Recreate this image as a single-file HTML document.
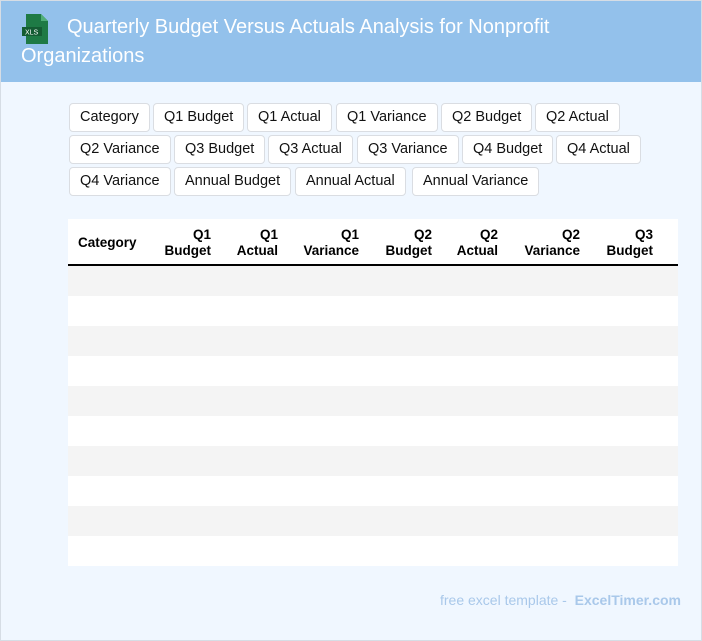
<!DOCTYPE html><html><head><style>
body{margin:0;width:702px;height:641px;background:#f0f7ff;font-family:"Liberation Sans",sans-serif;position:relative;overflow:hidden}
.wrap{position:absolute;left:0;top:0;width:702px;height:641px}
.bd{position:absolute;left:0;top:0;width:700px;height:639px;border:1px solid #d6dde5}
.hd{position:absolute;left:1px;top:1px;width:700px;height:81px;background:#93c1eb}
.t{position:absolute;color:#fff;font-size:20px;line-height:29px}
.tag{position:absolute;height:27px;border:1px solid #dadde2;border-radius:4px;background:#fff;font-size:14.5px;line-height:27px;padding:0 10px;color:#111;white-space:nowrap}
.tbl{position:absolute;left:68px;top:219px;width:610px;height:347px;background:#fff;overflow:hidden}
.h{position:absolute;font-weight:bold;font-size:13.5px;line-height:16px;text-align:right;color:#000}
.r{position:absolute;left:0;width:610px;height:30px}
</style></head><body><div class="wrap">
<div class="bd"></div>
<div class="hd">
<svg style="position:absolute;left:21px;top:13px" width="28" height="30" viewBox="0 0 28 30"><path d="M4 0h15l7 7v23H4z" fill="#1e7a45"/><path d="M19 0v7h7z" fill="#4fae77"/><rect x="0" y="13" width="20" height="9" fill="#145c33"/><text x="3" y="20.5" font-size="7" fill="#fff" font-family="Liberation Sans">XLS</text></svg>
<div class="t" style="left:66px;top:12px">Quarterly Budget Versus Actuals Analysis for Nonprofit</div>
<div class="t" style="left:20px;top:41px">Organizations</div>
</div>
<div class="tag" style="left:69px;top:103px">Category</div>
<div class="tag" style="left:153px;top:103px">Q1 Budget</div>
<div class="tag" style="left:247px;top:103px">Q1 Actual</div>
<div class="tag" style="left:336px;top:103px">Q1 Variance</div>
<div class="tag" style="left:441px;top:103px">Q2 Budget</div>
<div class="tag" style="left:535px;top:103px">Q2 Actual</div>
<div class="tag" style="left:69px;top:135px">Q2 Variance</div>
<div class="tag" style="left:174px;top:135px">Q3 Budget</div>
<div class="tag" style="left:268px;top:135px">Q3 Actual</div>
<div class="tag" style="left:357px;top:135px">Q3 Variance</div>
<div class="tag" style="left:462px;top:135px">Q4 Budget</div>
<div class="tag" style="left:556px;top:135px">Q4 Actual</div>
<div class="tag" style="left:69px;top:167px">Q4 Variance</div>
<div class="tag" style="left:174px;top:167px">Annual Budget</div>
<div class="tag" style="left:295px;top:167px">Annual Actual</div>
<div class="tag" style="left:412px;top:167px">Annual Variance</div>
<div class="tbl">
<div class="h" style="left:10px;top:16px;text-align:left">Category</div>
<div class="h" style="right:467px;top:8px">Q1<br>Budget</div>
<div class="h" style="right:400px;top:8px">Q1<br>Actual</div>
<div class="h" style="right:319px;top:8px">Q1<br>Variance</div>
<div class="h" style="right:246px;top:8px">Q2<br>Budget</div>
<div class="h" style="right:180px;top:8px">Q2<br>Actual</div>
<div class="h" style="right:98px;top:8px">Q2<br>Variance</div>
<div class="h" style="right:25px;top:8px">Q3<br>Budget</div>
<div style="position:absolute;left:0;top:45px;width:610px;height:2px;background:#000"></div>
<div class="r" style="top:47px;background:#f4f4f4"></div>
<div class="r" style="top:107px;background:#f4f4f4"></div>
<div class="r" style="top:167px;background:#f4f4f4"></div>
<div class="r" style="top:227px;background:#f4f4f4"></div>
<div class="r" style="top:287px;background:#f4f4f4"></div>
</div>
<div style="position:absolute;right:21px;top:592px;font-size:14px;color:#a9c8ea">free excel template - &nbsp;<b>ExcelTimer.com</b></div>
</div></body></html>
